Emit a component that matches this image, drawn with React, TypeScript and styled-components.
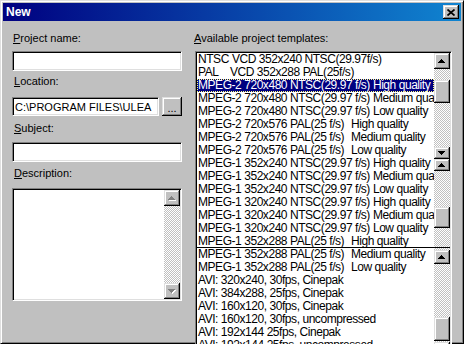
import React from 'react';
import styled, { createGlobalStyle } from 'styled-components';

const GlobalStyle = createGlobalStyle`
  html, body {
    margin: 0;
    padding: 0;
    overflow: hidden;
    background: #c0c0c0;
  }
  body {
    font-family: "Liberation Sans", Arial, sans-serif;
    font-size: 11px;
    color: #000;
  }
`;

const raised = `
  background: #c0c0c0;
  box-shadow: inset -1px -1px #000, inset 1px 1px #dfdfdf, inset -2px -2px #808080, inset 2px 2px #fff;
`;

const sunken = `
  box-sizing: border-box;
  background: #fff;
  border: 1px solid;
  border-color: #808080 #fff #fff #808080;
  box-shadow: inset 1px 1px #000, inset -1px -1px #dfdfdf;
`;

const Window = styled.div`
  box-sizing: border-box;
  width: 464px;
  height: 344px;
  background: #c0c0c0;
  border: 1px solid;
  border-color: #dfdfdf #000 #000 #dfdfdf;
  box-shadow: inset 1px 1px #fff, inset -1px -1px #808080;
  padding: 2px;
  display: flex;
  flex-direction: column;
`;

const TitleBar = styled.div`
  height: 18px;
  flex: none;
  display: flex;
  align-items: center;
  justify-content: space-between;
  padding: 0 2px 0 3px;
  background: linear-gradient(90deg, #000080, #1084d0);
  color: #fff;
  font-weight: bold;
  font-size: 12px;
`;

const CloseButton = styled.div`
  ${raised}
  width: 16px;
  height: 14px;
  display: flex;
  align-items: center;
  justify-content: center;
`;

const Body = styled.div`
  flex: 1;
  min-height: 0;
  display: flex;
  gap: 13px;
  padding: 11px 9px 0 9px;
`;

const LeftColumn = styled.div`
  width: 170px;
  flex: none;
  display: flex;
  flex-direction: column;
`;

const RightColumn = styled.div`
  width: 257px;
  flex: none;
  display: flex;
  flex-direction: column;
`;

const Label = styled.div<{ $mt?: number; $mb: number; $ml?: number }>`
  height: 13px;
  line-height: 13px;
  flex: none;
  margin-top: ${(p) => p.$mt ?? 0}px;
  margin-bottom: ${(p) => p.$mb}px;
  margin-left: ${(p) => p.$ml ?? 1}px;
  white-space: nowrap;
`;

const Edit = styled.div<{ $h: number; $w?: number }>`
  ${sunken}
  height: ${(p) => p.$h}px;
  width: ${(p) => (p.$w ? `${p.$w}px` : 'auto')};
  flex: none;
  display: flex;
  align-items: center;
  padding: 0 3px 0 2px;
  white-space: nowrap;
  overflow: hidden;
`;

const EditRow = styled.div`
  display: flex;
  flex: none;
  gap: 3px;
`;

const BrowseButton = styled.div`
  ${raised}
  width: 20px;
  height: 19px;
  display: flex;
  align-items: flex-end;
  justify-content: center;
  padding-bottom: 4px;
  box-sizing: border-box;
  line-height: 8px;
`;

const Memo = styled.div`
  ${sunken}
  height: 113px;
  flex: none;
  display: flex;
  justify-content: flex-end;
  padding: 1px;
`;

const ScrollColumn = styled.div`
  width: 16px;
  flex: none;
  display: flex;
  flex-direction: column;
`;

const ScrollBtn = styled.div<{ $h: number }>`
  ${raised}
  height: ${(p) => p.$h}px;
  flex: none;
  display: flex;
  align-items: center;
  justify-content: center;
  overflow: hidden;
`;

const Track = styled.div<{ $h?: number }>`
  height: ${(p) => (p.$h ? `${p.$h}px` : 'auto')};
  flex: ${(p) => (p.$h ? 'none' : '1')};
  background: repeating-conic-gradient(#c0c0c0 0 25%, #fff 0 50%) 0 0 / 2px 2px;
`;

const Thumb = styled.div<{ $h: number }>`
  ${raised}
  height: ${(p) => p.$h}px;
  flex: none;
`;

const Rule = styled.div`
  height: 1px;
  flex: none;
  background: #000;
`;

const ListBox = styled.div`
  ${sunken}
  height: 312px;
  flex: none;
  display: flex;
  padding: 1px;
  background: #fff;
`;

const Rows = styled.div`
  flex: 1;
  min-width: 0;
  overflow: hidden;
  font-size: 12px;
  letter-spacing: -0.45px;
`;

const Item = styled.div<{ $sel?: boolean; $cut?: boolean }>`
  box-sizing: border-box;
  height: 13px;
  line-height: 13px;
  padding-left: 1px;
  white-space: nowrap;
  background: ${(p) => (p.$sel ? '#000080' : 'transparent')};
  color: ${(p) => (p.$sel ? '#fff' : '#000')};
  outline: ${(p) => (p.$sel ? '1px dotted #ffff80' : 'none')};
  outline-offset: -1px;
  border-bottom: ${(p) => (p.$cut ? '1px solid #000' : 'none')};
`;

const Lead = styled.span<{ $tab: number }>`
  display: inline-block;
  min-width: ${(p) => p.$tab}px;
  margin-right: 3px;
`;

type Seg = { k: 'up' | 'down' | 'track' | 'thumb' | 'rule'; h: number };

type Row = { a: string; b?: string; tab?: number; sel?: boolean; cut?: boolean };

const ntsc2 = 'MPEG-2 720x480 NTSC(29.97 f/s)';
const pal2 = 'MPEG-2 720x576 PAL(25 f/s)';
const ntsc1a = 'MPEG-1 352x240 NTSC(29.97 f/s)';
const ntsc1b = 'MPEG-1 320x240 NTSC(29.97 f/s)';
const pal1 = 'MPEG-1 352x288 PAL(25 f/s)';
const TAB = 150;

const templates: Row[] = [
  { a: 'NTSC', b: 'VCD 352x240 NTSC(29.97f/s)', tab: 0 },
  { a: 'PAL', b: 'VCD 352x288 PAL(25f/s)', tab: 29 },
  { a: ntsc2, b: 'High quality', tab: TAB, sel: true },
  { a: ntsc2, b: 'Medium quality', tab: TAB },
  { a: ntsc2, b: 'Low quality', tab: TAB },
  { a: pal2, b: 'High quality', tab: TAB },
  { a: pal2, b: 'Medium quality', tab: TAB },
  { a: pal2, b: 'Low quality', tab: TAB },
  { a: ntsc1a, b: 'High quality', tab: TAB },
  { a: ntsc1a, b: 'Medium quality', tab: TAB },
  { a: ntsc1a, b: 'Low quality', tab: TAB },
  { a: ntsc1b, b: 'High quality', tab: TAB },
  { a: ntsc1b, b: 'Medium quality', tab: TAB },
  { a: ntsc1b, b: 'Low quality', tab: TAB },
  { a: pal1, b: 'High quality', tab: TAB, cut: true },
  { a: pal1, b: 'Medium quality', tab: TAB },
  { a: pal1, b: 'Low quality', tab: TAB },
  { a: 'AVI: 320x240, 30fps, Cinepak' },
  { a: 'AVI: 384x288, 25fps, Cinepak' },
  { a: 'AVI: 160x120, 30fps, Cinepak' },
  { a: 'AVI: 160x120, 30fps, uncompressed' },
  { a: 'AVI: 192x144 25fps, Cinepak' },
  { a: 'AVI: 192x144 25fps, uncompressed' },
];

// the list was caught mid-redraw, so its scroll bar is painted in three pieces
const listScroll: Seg[] = [
  { k: 'up', h: 16 },
  { k: 'track', h: 11 },
  { k: 'thumb', h: 23 },
  { k: 'track', h: 44 },
  { k: 'down', h: 12 },
  { k: 'up', h: 12 },
  { k: 'track', h: 36 },
  { k: 'thumb', h: 21 },
  { k: 'track', h: 19 },
  { k: 'rule', h: 1 },
  { k: 'track', h: 2 },
  { k: 'up', h: 14 },
  { k: 'track', h: 53 },
  { k: 'thumb', h: 24 },
  { k: 'track', h: 1 },
  { k: 'down', h: 16 },
];

const Arrow: React.FC<{ dir: 'up' | 'down'; disabled?: boolean }> = ({ dir, disabled }) => {
  const pts = dir === 'up' ? '3.5,0 7,4 0,4' : '0,0 7,0 3.5,4';
  return (
    <svg width="8" height="5" viewBox="0 0 8 5" shapeRendering="crispEdges">
      {disabled && <polygon points={pts} fill="#fff" transform="translate(1 1)" />}
      <polygon points={pts} fill={disabled ? '#808080' : '#000'} />
    </svg>
  );
};

const App: React.FC = () => {
  return (
    <>
      <GlobalStyle />
      <Window>
        <TitleBar>
          <span>New</span>
          <CloseButton>
            <svg width="8" height="7" viewBox="0 0 8 7">
              <path d="M0.5 0.5L7.5 6.5M7.5 0.5L0.5 6.5" stroke="#000" strokeWidth="1.7" />
            </svg>
          </CloseButton>
        </TitleBar>
        <Body>
          <LeftColumn>
            <Label $mb={6}>
              <u>P</u>roject name:
            </Label>
            <Edit $h={20} />
            <Label $mt={4} $mb={9} $ml={2}>
              <u>L</u>ocation:
            </Label>
            <EditRow>
              <Edit $h={19} $w={147}>
                {'C:\\PROGRAM FILES\\ULEA'}
              </Edit>
              <BrowseButton>...</BrowseButton>
            </EditRow>
            <Label $mt={6} $mb={7} $ml={2}>
              <u>S</u>ubject:
            </Label>
            <Edit $h={20} />
            <Label $mt={5} $mb={8} $ml={2}>
              <u>D</u>escription:
            </Label>
            <Memo>
              <ScrollColumn>
                <ScrollBtn $h={16}>
                  <Arrow dir="up" disabled />
                </ScrollBtn>
                <Track />
                <ScrollBtn $h={16}>
                  <Arrow dir="down" disabled />
                </ScrollBtn>
              </ScrollColumn>
            </Memo>
          </LeftColumn>
          <RightColumn>
            <Label $mb={6} $ml={-1}>
              <u>A</u>vailable project templates:
            </Label>
            <ListBox>
              <Rows>
                {templates.map((r, i) => (
                  <Item key={i} $sel={r.sel} $cut={r.cut}>
                    {r.b !== undefined ? (
                      <>
                        <Lead $tab={r.tab ?? 0}>{r.a}</Lead>
                        {r.b}
                      </>
                    ) : (
                      r.a
                    )}
                  </Item>
                ))}
              </Rows>
              <ScrollColumn>
                {listScroll.map((s, i) => {
                  if (s.k === 'up' || s.k === 'down')
                    return (
                      <ScrollBtn key={i} $h={s.h}>
                        <Arrow dir={s.k} />
                      </ScrollBtn>
                    );
                  if (s.k === 'thumb') return <Thumb key={i} $h={s.h} />;
                  if (s.k === 'rule') return <Rule key={i} />;
                  return <Track key={i} $h={s.h} />;
                })}
              </ScrollColumn>
            </ListBox>
          </RightColumn>
        </Body>
      </Window>
    </>
  );
};

export default App;
